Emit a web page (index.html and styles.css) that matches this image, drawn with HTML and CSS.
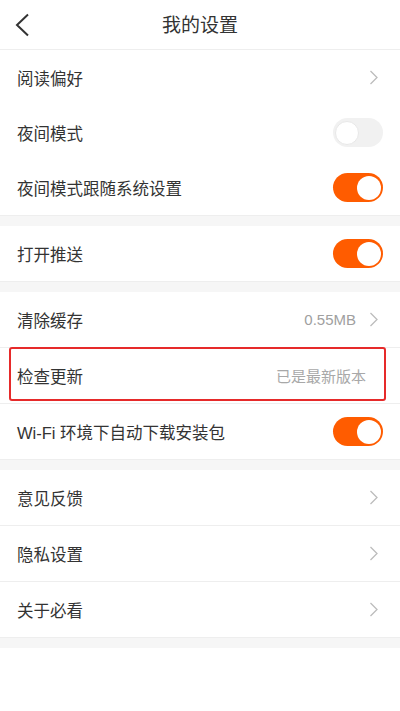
FILE: index.html
```html
<!DOCTYPE html>
<html lang="zh-CN">
<head>
<meta charset="utf-8">
<title>我的设置</title>
<link rel="stylesheet" href="styles.css">
</head>
<body>
<div class="page">
  <header class="header">
    <svg class="back" width="16" height="24" viewBox="0 0 16 24"><polyline points="13,1.5 2,12 13,22.5" fill="none" stroke="#333" stroke-width="2"/></svg>
    <h1 class="title">我的设置</h1>
  </header>

  <section class="group">
    <div class="row"><span class="label">阅读偏好</span><span class="right"><svg class="chev" width="9" height="15" viewBox="0 0 9 15"><polyline points="1.5,1 8,7.5 1.5,14" fill="none" stroke="#bcbcbc" stroke-width="1.3"/></svg></span></div>
    <div class="row"><span class="label">夜间模式</span><span class="toggle off"><span class="knob"></span></span></div>
    <div class="row"><span class="label">夜间模式跟随系统设置</span><span class="toggle on"><span class="knob"></span></span></div>
  </section>

  <section class="group">
    <div class="row"><span class="label">打开推送</span><span class="toggle on"><span class="knob"></span></span></div>
  </section>

  <section class="group">
    <div class="row sep"><span class="label">清除缓存</span><span class="right"><span class="value">0.55MB</span><svg class="chev" width="9" height="15" viewBox="0 0 9 15"><polyline points="1.5,1 8,7.5 1.5,14" fill="none" stroke="#bcbcbc" stroke-width="1.3"/></svg></span></div>
    <div class="row sep"><span class="label">检查更新</span><span class="value latest">已是最新版本</span><span class="mark"></span></div>
    <div class="row"><span class="label">Wi-Fi 环境下自动下载安装包</span><span class="toggle on"><span class="knob"></span></span></div>
  </section>

  <section class="group">
    <div class="row sep"><span class="label">意见反馈</span><span class="right"><svg class="chev" width="9" height="15" viewBox="0 0 9 15"><polyline points="1.5,1 8,7.5 1.5,14" fill="none" stroke="#bcbcbc" stroke-width="1.3"/></svg></span></div>
    <div class="row sep"><span class="label">隐私设置</span><span class="right"><svg class="chev" width="9" height="15" viewBox="0 0 9 15"><polyline points="1.5,1 8,7.5 1.5,14" fill="none" stroke="#bcbcbc" stroke-width="1.3"/></svg></span></div>
    <div class="row"><span class="label">关于必看</span><span class="right"><svg class="chev" width="9" height="15" viewBox="0 0 9 15"><polyline points="1.5,1 8,7.5 1.5,14" fill="none" stroke="#bcbcbc" stroke-width="1.3"/></svg></span></div>
  </section>
  <div class="tail"></div>
</div>
</body>
</html>
```
FILE: styles.css
```css
html, body {
  margin: 0;
  padding: 0;
  background: #fff;
}
body {
  font-family: "Liberation Sans", "Noto Sans CJK SC", sans-serif;
  color: #333;
}
.page {
  width: 400px;
  min-height: 711px;
  display: flex;
  flex-direction: column;
  background: #f6f6f6;
}
.header {
  position: relative;
  height: 49px;
  border-bottom: 1px solid #eeeeee;
  display: flex;
  align-items: center;
  justify-content: center;
  background: #fff;
}
.back {
  position: absolute;
  left: 15px;
  top: 13px;
}
.title {
  margin: 0;
  font-size: 19px;
  font-weight: normal;
  color: #333;
  line-height: 1;
  padding-top: 2px;
}
.group {
  background: #fff;
  border-bottom: 1px solid #eeeeee;
  margin-bottom: 10px;
}
.tail {
  flex: 1;
  background: #fff;
}
.row {
  position: relative;
  height: 55px;
  display: flex;
  align-items: center;
  justify-content: space-between;
  padding: 0 17px;
  background: #fff;
}
.row.sep {
  border-bottom: 1px solid #eeeeee;
}
.label {
  font-size: 16.5px;
  color: #333;
}
.right {
  display: flex;
  align-items: center;
  gap: 13px;
  padding-right: 5px;
}
.chev {
  display: block;
}
.value {
  font-size: 15px;
  color: #a0a0a0;
}
.latest {
  padding-right: 17px;
  color: #a8a8a8;
}
.toggle {
  position: relative;
  width: 50px;
  height: 29px;
  border-radius: 15px;
}
.toggle.on {
  background: #ff5c00;
}
.toggle.off {
  background: #f1f1f1;
}
.knob {
  position: absolute;
  top: 2.5px;
  width: 24px;
  height: 24px;
  border-radius: 50%;
  background: #fff;
  box-sizing: border-box;
}
.toggle.on .knob {
  right: 2px;
}
.toggle.off .knob {
  left: 2px;
  border: 1px solid #e8e8e8;
}
.mark {
  position: absolute;
  left: 9px;
  top: -1px;
  width: 377px;
  height: 54px;
  border: 2px solid #e62a2a;
  border-radius: 3px;
  box-sizing: border-box;
  pointer-events: none;
}
```
